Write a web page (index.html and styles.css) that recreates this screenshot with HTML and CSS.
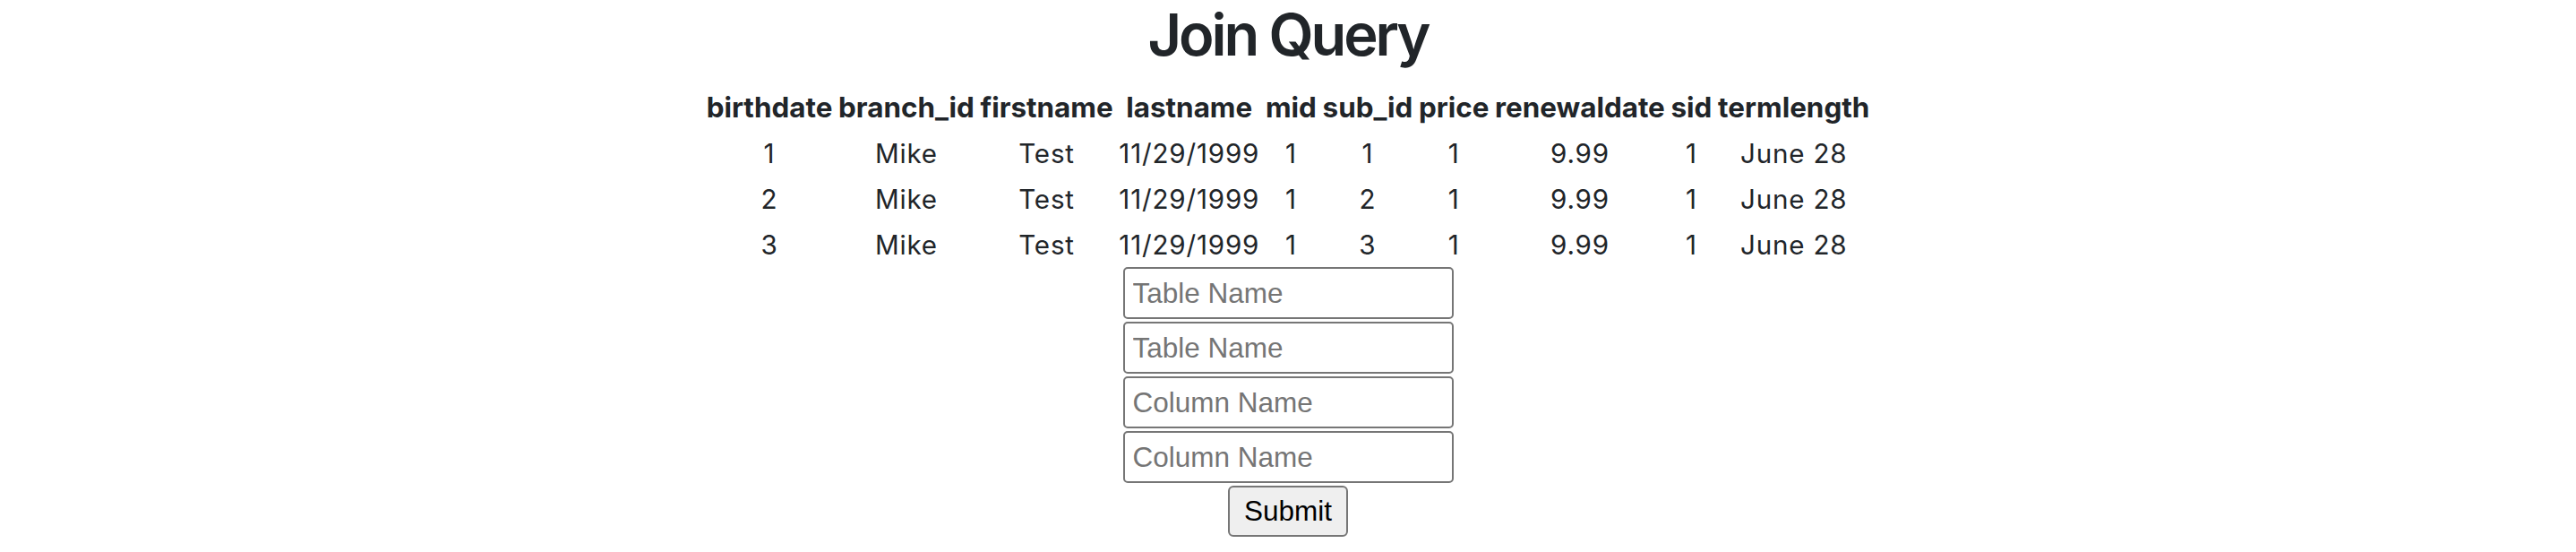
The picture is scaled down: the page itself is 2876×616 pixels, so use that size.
FILE: index.html
```html
<!DOCTYPE html>
<html lang="en">
<head>
<meta charset="utf-8">
<title>Join Query</title>
<link rel="stylesheet" href="styles.css">
</head>
<body>
<h1 class="title">Join Query</h1>
<table class="results">
  <thead>
    <tr>
      <th>birthdate</th><th>branch_id</th><th>firstname</th><th>lastname</th><th>mid</th><th>sub_id</th><th>price</th><th>renewaldate</th><th>sid</th><th>termlength</th>
    </tr>
  </thead>
  <tbody>
    <tr><td>1</td><td>Mike</td><td>Test</td><td>11/29/1999</td><td>1</td><td>1</td><td>1</td><td>9.99</td><td>1</td><td>June 28</td></tr>
    <tr><td>2</td><td>Mike</td><td>Test</td><td>11/29/1999</td><td>1</td><td>2</td><td>1</td><td>9.99</td><td>1</td><td>June 28</td></tr>
    <tr><td>3</td><td>Mike</td><td>Test</td><td>11/29/1999</td><td>1</td><td>3</td><td>1</td><td>9.99</td><td>1</td><td>June 28</td></tr>
  </tbody>
</table>
<form class="join-form">
  <input class="field" type="text" placeholder="Table Name">
  <input class="field" type="text" placeholder="Table Name">
  <input class="field" type="text" placeholder="Column Name">
  <input class="field" type="text" placeholder="Column Name">
  <button class="submit" type="button">Submit</button>
</form>
</body>
</html>
```

FILE: styles.css
```css
body {
  margin: 0;
  font-family: Inter, "Noto Sans", sans-serif;
  font-size: 29.6px;
  line-height: 1.5;
  color: #212529;
  background: #fff;
}

.title {
  margin: 0 0 15px;
  font-size: 65px;
  font-weight: 600;
  line-height: 1.2;
  letter-spacing: -3.1px;
  text-align: center;
}

.results {
  margin: 0 auto;
  border-collapse: separate;
  border-spacing: 3.7px;
}

.results th,
.results td {
  padding: 1.85px;
  text-align: center;
}

.results th {
  font-size: 31.4px;
  line-height: 44.4px;
  font-weight: 700;
}

.results td {
  letter-spacing: 0.8px;
}

.join-form {
  display: flex;
  flex-direction: column;
  align-items: center;
  gap: 3px;
  margin-top: -2px;
}

.field {
  box-sizing: border-box;
  width: 369px;
  height: 58px;
  margin: 0;
  padding: 0 9px;
  border: 2px solid #767676;
  border-radius: 5px;
  font-family: "Liberation Sans", Arial, sans-serif;
  font-size: 31.5px;
  color: #000;
  background: #fff;
}

.field::placeholder {
  color: #757575;
}

.submit {
  box-sizing: border-box;
  width: 134px;
  height: 57px;
  margin: 0;
  padding: 0;
  border: 2px solid #767676;
  border-radius: 6px;
  background: #efefef;
  font-family: "Liberation Sans", Arial, sans-serif;
  font-size: 31.5px;
  color: #000;
}
```
